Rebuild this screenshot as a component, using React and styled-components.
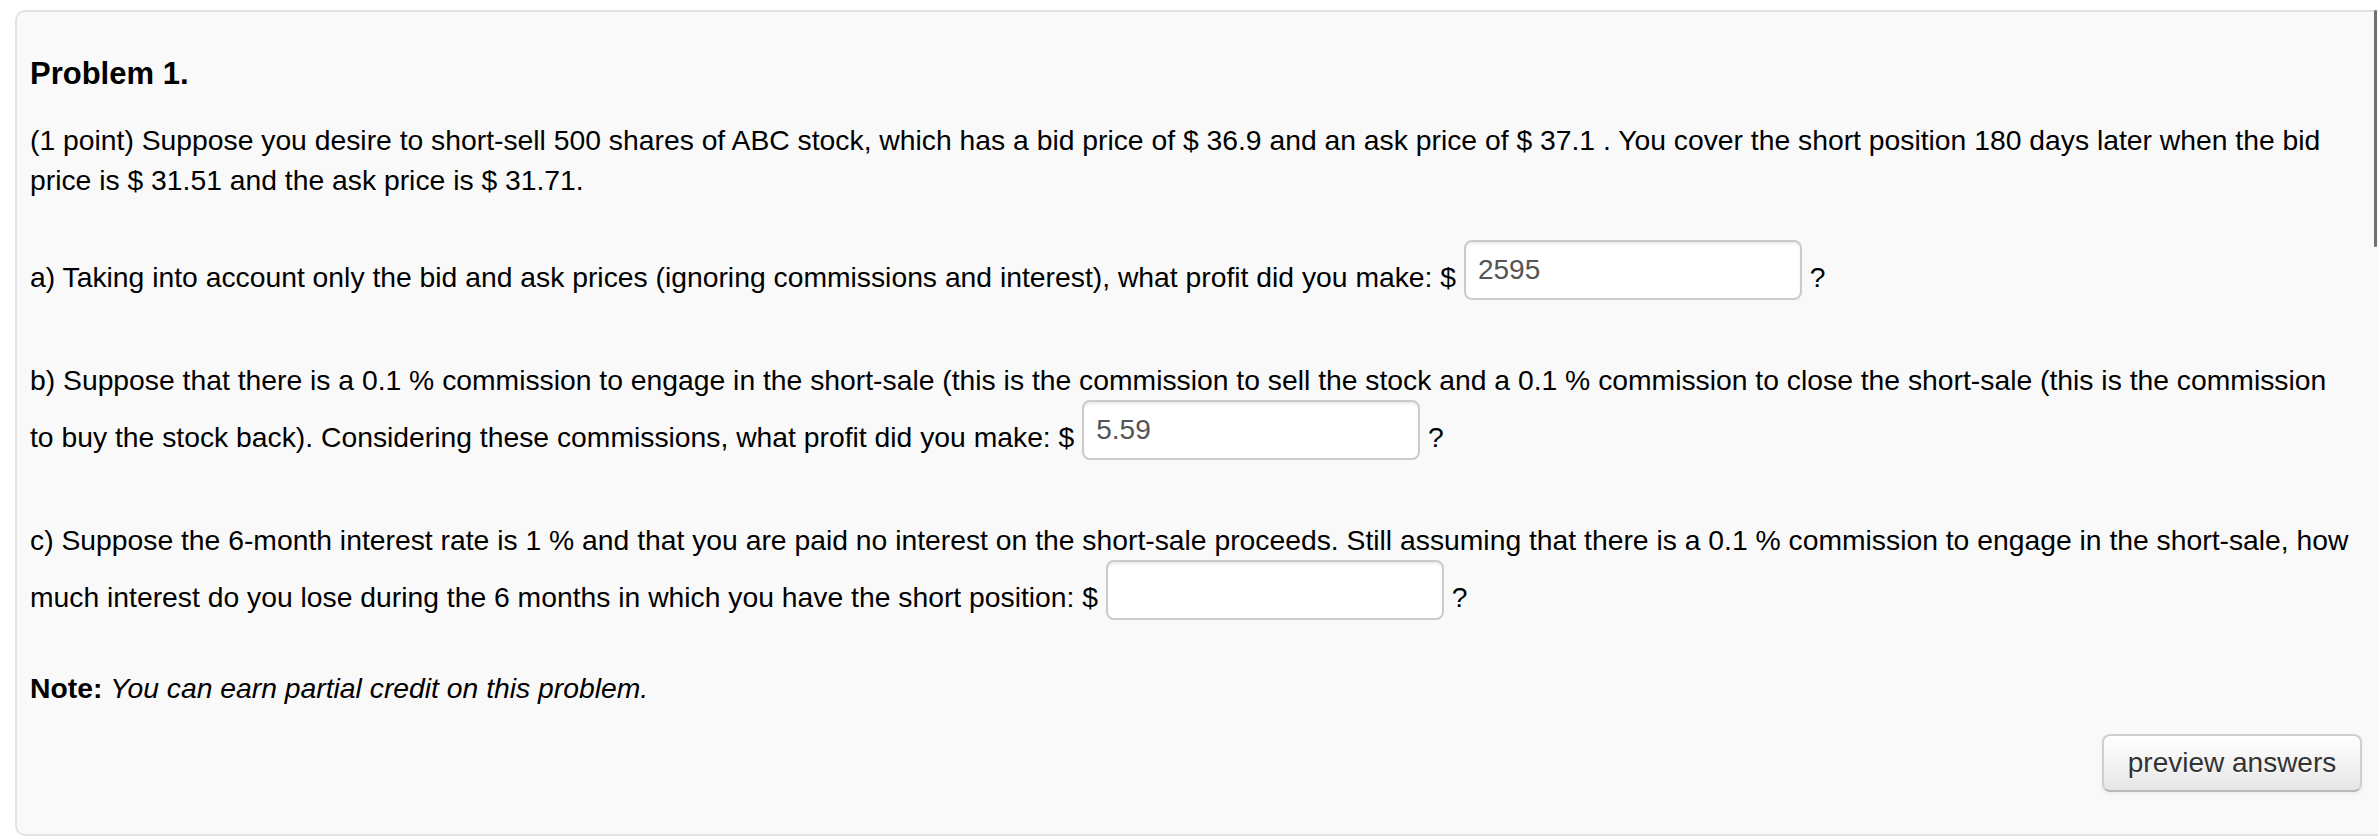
import React from "react"
import styled, { createGlobalStyle } from "styled-components"

const GlobalStyle = createGlobalStyle`
  html, body {
    margin: 0;
    padding: 0;
    background: #fff;
  }
  body {
    font-family: "Liberation Sans", Arial, Helvetica, sans-serif;
    color: #000;
  }
`

const Page = styled.div`
  position: relative;
  height: 837px;
  overflow: hidden;
  padding: 10px 0 0 15px;
  box-sizing: border-box;
`

const Well = styled.div`
  box-sizing: border-box;
  height: 826px;
  background: #f9f9f9;
  border: 2px solid #e2e2e2;
  border-right: none;
  border-radius: 10px 0 0 10px;
  padding: 42px 16px 0 13px;
`

const Title = styled.div`
  font-size: 31px;
  line-height: 40px;
  font-weight: bold;
  margin: 0 0 26px;
`

const Body = styled.div`
  font-size: 28.3px;
  line-height: 40px;
  padding-right: 9px;
`

const Answer = styled.input`
  box-sizing: border-box;
  width: 338px;
  height: 60px;
  margin: 0 0 20px;
  padding: 0 12px;
  vertical-align: middle;
  background: #fff;
  border: 2px solid #cbcbcb;
  border-radius: 8px;
  box-shadow: inset 0 2px 2px rgba(0, 0, 0, 0.075);
  font-family: inherit;
  font-size: 28px;
  color: #555;
  outline: none;
`

const Note = styled.div`
  font-size: 28.3px;
  line-height: 40px;
  margin-top: 28px;

  b {
    font-weight: bold;
  }
  i {
    font-style: italic;
  }
`

const Actions = styled.div`
  display: flex;
  justify-content: flex-end;
  margin-top: 26px;
`

const PreviewButton = styled.button`
  box-sizing: border-box;
  width: 260px;
  height: 58px;
  padding: 0;
  border: 2px solid #cfcfcf;
  border-bottom-color: #b8b8b8;
  border-radius: 8px;
  background: linear-gradient(to bottom, #ffffff, #e6e6e6);
  box-shadow: inset 0 2px 0 rgba(255, 255, 255, 0.2), 0 2px 4px rgba(0, 0, 0, 0.05);
  font-family: inherit;
  font-size: 28px;
  color: #333;
  text-shadow: 0 1px 1px rgba(255, 255, 255, 0.75);
  cursor: pointer;
`

const ScrollThumb = styled.div`
  position: absolute;
  top: 10px;
  right: 1px;
  width: 3px;
  height: 237px;
  border-radius: 2px;
  background: #707070;
`

export default function App() {
  return (
    <>
      <GlobalStyle />
      <Page>
        <Well>
          <Title>Problem 1.</Title>
          <Body>
            (1 point) Suppose you desire to short-sell 500 shares of ABC stock, which has a bid
            price of $ 36.9 and an ask price of $ 37.1 . You cover the short position 180 days
            later when the bid price is $ 31.51 and the ask price is $ 31.71.
            <br />
            <br />
            a) Taking into account only the bid and ask prices (ignoring commissions and
            interest), what profit did you make: ${" "}
            <Answer defaultValue="2595" /> ?
            <br />
            <br />
            b) Suppose that there is a 0.1 % commission to engage in the short-sale (this is the
            commission to sell the stock and a 0.1 % commission to close the short-sale (this is
            the commission to buy the stock back). Considering these commissions, what profit did
            you make: $ <Answer defaultValue="5.59" /> ?
            <br />
            <br />
            c) Suppose the 6-month interest rate is 1 % and that you are paid no interest on the
            short-sale proceeds. Still assuming that there is a 0.1 % commission to engage in the
            short-sale, how much interest do you lose during the 6 months in which you have the
            short position: $ <Answer defaultValue="" /> ?
          </Body>
          <Note>
            <b>Note:</b> <i>You can earn partial credit on this problem.</i>
          </Note>
          <Actions>
            <PreviewButton>preview answers</PreviewButton>
          </Actions>
        </Well>
        <ScrollThumb />
      </Page>
    </>
  )
}
